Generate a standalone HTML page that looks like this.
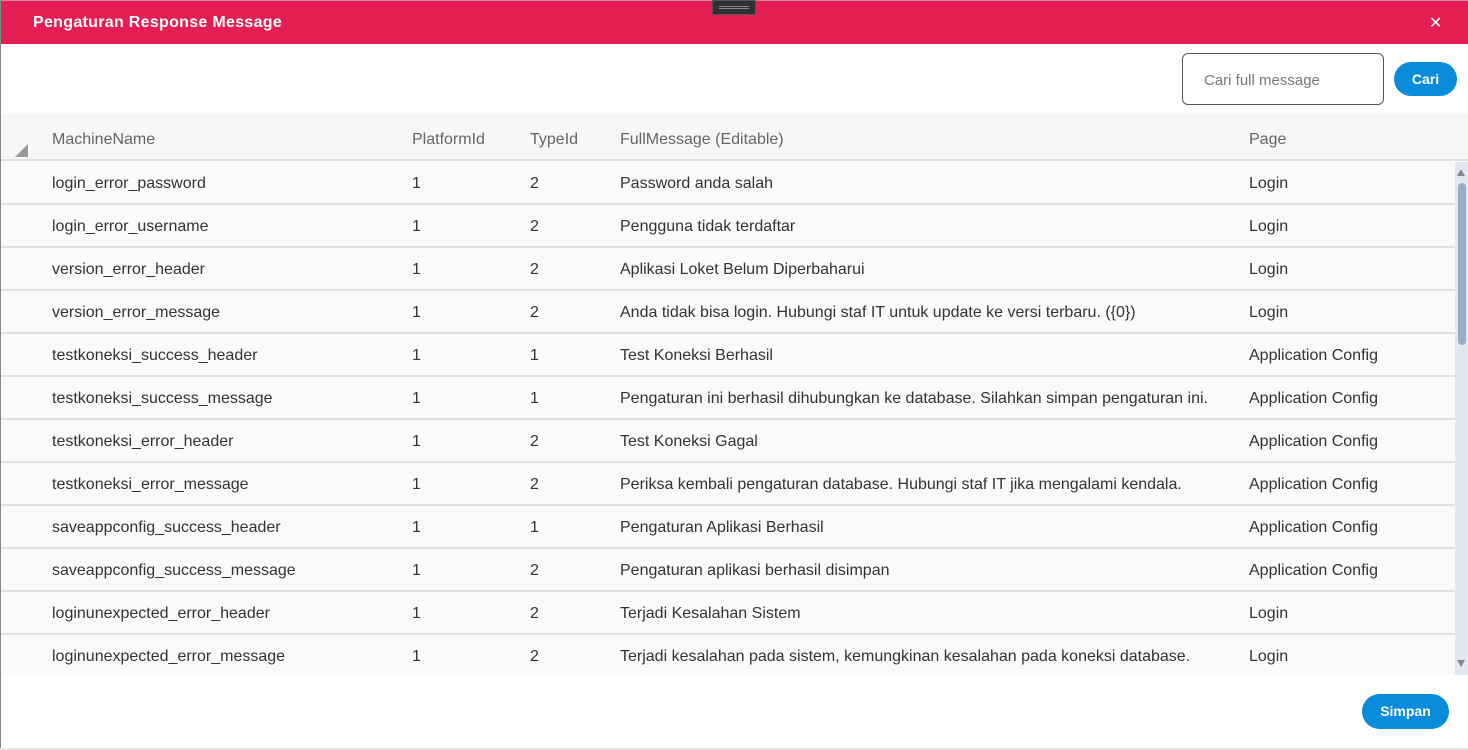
<!DOCTYPE html>
<html><head><meta charset="utf-8"><style>
*{box-sizing:border-box;margin:0;padding:0}
body{width:1468px;height:750px;background:#fff;font-family:"Liberation Sans",sans-serif;position:relative;overflow:hidden}
.lb{position:absolute;left:0;top:0;width:1px;height:750px;background:#888}
.hdr{position:absolute;left:0;top:0;width:1468px;height:44px;background:#e31e52;border-top:1px solid #c9899a}
.hdr .t{position:absolute;left:33px;top:13px;color:#fff;font-weight:bold;font-size:16px;letter-spacing:0.3px}
.hdr .x{position:absolute;left:1429px;top:12px;color:#fff;font-size:16px}
.handle{position:absolute;left:712px;top:0;width:44px;height:15px;background:#2f3034;border:1px solid #555}
.handle i{position:absolute;left:6px;top:5px;width:30px;height:3px;border-top:1px solid #888;border-bottom:1px solid #888}
.inp{position:absolute;left:1182px;top:53px;width:202px;height:52px;border:1px solid #555;border-radius:6px;font-size:15px;color:#777;padding:18px 0 0 21px}
.btn{position:absolute;background:#0a8cdb;color:#fff;font-weight:bold;font-size:14px;border-radius:18px;text-align:center}
.th{position:absolute;left:1px;top:114px;width:1467px;height:47px;background:#f7f7f7;border-bottom:2px solid #e0e0e0}
.cell{position:absolute;font-size:16px;color:#333;white-space:nowrap}
.th .cell{color:#666;top:17px}
.row{position:absolute;left:1px;width:1454px;height:43px;background:#fafafa;border-bottom:2px solid #e0e0e0}
.row .cell{top:13px}
.sb{position:absolute;left:1455px;top:162px;width:13px;height:513px;background:#e1e8f2}
.thumb{position:absolute;left:3px;top:21px;width:8px;height:162px;background:#9aabc6;border-radius:4px}
</style></head><body>
<div class="hdr"><div class="t">Pengaturan Response Message</div><div class="x">✕</div></div>
<div class="lb"></div>
<div class="handle"><i></i></div>
<div class="inp">Cari full message</div>
<div class="btn" style="left:1394px;top:62px;width:63px;height:34px;line-height:34px">Cari</div>
<div class="th">
<div style="position:absolute;left:14px;top:30px;width:0;height:0;border-left:13px solid transparent;border-bottom:13px solid #999"></div>
<div class="cell" style="left:51px">MachineName</div>
<div class="cell" style="left:411px">PlatformId</div>
<div class="cell" style="left:529px">TypeId</div>
<div class="cell" style="left:619px">FullMessage (Editable)</div>
<div class="cell" style="left:1248px">Page</div>
</div>
<div class="row" style="top:162px"><div class="cell" style="left:51px">login_error_password</div><div class="cell" style="left:411px">1</div><div class="cell" style="left:529px">2</div><div class="cell" style="left:619px">Password anda salah</div><div class="cell" style="left:1248px">Login</div></div>
<div class="row" style="top:205px"><div class="cell" style="left:51px">login_error_username</div><div class="cell" style="left:411px">1</div><div class="cell" style="left:529px">2</div><div class="cell" style="left:619px">Pengguna tidak terdaftar</div><div class="cell" style="left:1248px">Login</div></div>
<div class="row" style="top:248px"><div class="cell" style="left:51px">version_error_header</div><div class="cell" style="left:411px">1</div><div class="cell" style="left:529px">2</div><div class="cell" style="left:619px">Aplikasi Loket Belum Diperbaharui</div><div class="cell" style="left:1248px">Login</div></div>
<div class="row" style="top:291px"><div class="cell" style="left:51px">version_error_message</div><div class="cell" style="left:411px">1</div><div class="cell" style="left:529px">2</div><div class="cell" style="left:619px">Anda tidak bisa login. Hubungi staf IT untuk update ke versi terbaru. ({0})</div><div class="cell" style="left:1248px">Login</div></div>
<div class="row" style="top:334px"><div class="cell" style="left:51px">testkoneksi_success_header</div><div class="cell" style="left:411px">1</div><div class="cell" style="left:529px">1</div><div class="cell" style="left:619px">Test Koneksi Berhasil</div><div class="cell" style="left:1248px">Application Config</div></div>
<div class="row" style="top:377px"><div class="cell" style="left:51px">testkoneksi_success_message</div><div class="cell" style="left:411px">1</div><div class="cell" style="left:529px">1</div><div class="cell" style="left:619px">Pengaturan ini berhasil dihubungkan ke database. Silahkan simpan pengaturan ini.</div><div class="cell" style="left:1248px">Application Config</div></div>
<div class="row" style="top:420px"><div class="cell" style="left:51px">testkoneksi_error_header</div><div class="cell" style="left:411px">1</div><div class="cell" style="left:529px">2</div><div class="cell" style="left:619px">Test Koneksi Gagal</div><div class="cell" style="left:1248px">Application Config</div></div>
<div class="row" style="top:463px"><div class="cell" style="left:51px">testkoneksi_error_message</div><div class="cell" style="left:411px">1</div><div class="cell" style="left:529px">2</div><div class="cell" style="left:619px">Periksa kembali pengaturan database. Hubungi staf IT jika mengalami kendala.</div><div class="cell" style="left:1248px">Application Config</div></div>
<div class="row" style="top:506px"><div class="cell" style="left:51px">saveappconfig_success_header</div><div class="cell" style="left:411px">1</div><div class="cell" style="left:529px">1</div><div class="cell" style="left:619px">Pengaturan Aplikasi Berhasil</div><div class="cell" style="left:1248px">Application Config</div></div>
<div class="row" style="top:549px"><div class="cell" style="left:51px">saveappconfig_success_message</div><div class="cell" style="left:411px">1</div><div class="cell" style="left:529px">2</div><div class="cell" style="left:619px">Pengaturan aplikasi berhasil disimpan</div><div class="cell" style="left:1248px">Application Config</div></div>
<div class="row" style="top:592px"><div class="cell" style="left:51px">loginunexpected_error_header</div><div class="cell" style="left:411px">1</div><div class="cell" style="left:529px">2</div><div class="cell" style="left:619px">Terjadi Kesalahan Sistem</div><div class="cell" style="left:1248px">Login</div></div>
<div class="row" style="top:635px;height:40px;border-bottom:none"><div class="cell" style="left:51px">loginunexpected_error_message</div><div class="cell" style="left:411px">1</div><div class="cell" style="left:529px">2</div><div class="cell" style="left:619px">Terjadi kesalahan pada sistem, kemungkinan kesalahan pada koneksi database.</div><div class="cell" style="left:1248px">Login</div></div>
<div class="sb"><div style="position:absolute;left:2px;top:7px;border-left:4px solid transparent;border-right:4px solid transparent;border-bottom:7px solid #888"></div><div class="thumb"></div><div style="position:absolute;left:2px;top:498px;border-left:4px solid transparent;border-right:4px solid transparent;border-top:7px solid #888"></div></div>
<div class="btn" style="left:1362px;top:694px;width:87px;height:35px;line-height:35px">Simpan</div>
<div style="position:absolute;left:0;top:748px;width:1468px;height:2px;background:#e8e8e8"></div>
</body></html>
